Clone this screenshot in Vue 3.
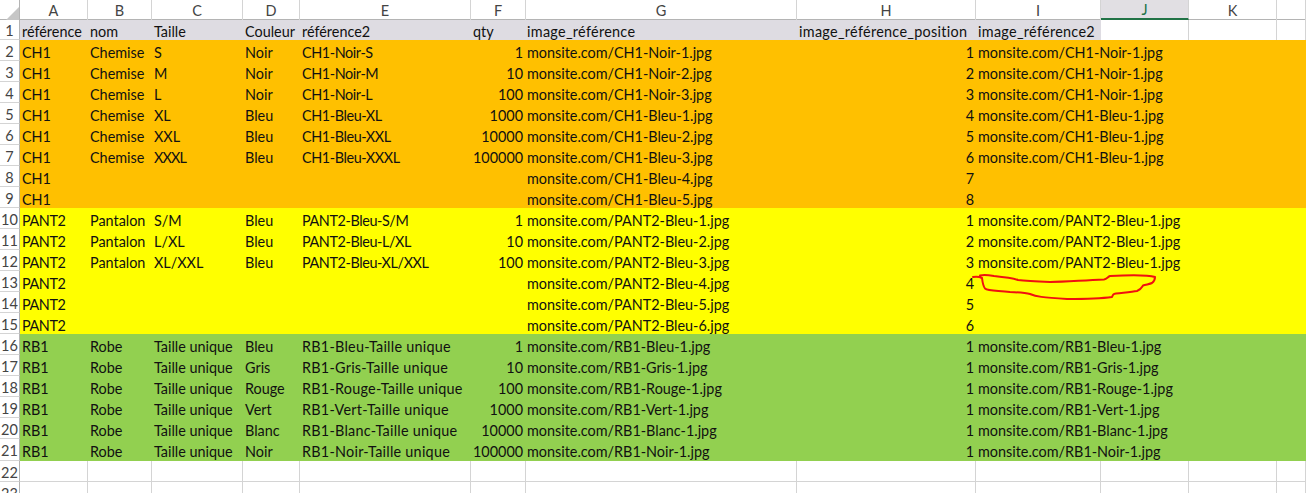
<script setup>
const cols = ['A','B','C','D','E','F','G','H','I','J','K','']
const header = ['référence','nom','Taille','Couleur','référence2','qty','image_référence','image_référence_position','image_référence2']
const ch = [
  ['CH1','Chemise','S','Noir','CH1-Noir-S',1,'monsite.com/CH1-Noir-1.jpg',1,'monsite.com/CH1-Noir-1.jpg'],
  ['CH1','Chemise','M','Noir','CH1-Noir-M',10,'monsite.com/CH1-Noir-2.jpg',2,'monsite.com/CH1-Noir-1.jpg'],
  ['CH1','Chemise','L','Noir','CH1-Noir-L',100,'monsite.com/CH1-Noir-3.jpg',3,'monsite.com/CH1-Noir-1.jpg'],
  ['CH1','Chemise','XL','Bleu','CH1-Bleu-XL',1000,'monsite.com/CH1-Bleu-1.jpg',4,'monsite.com/CH1-Bleu-1.jpg'],
  ['CH1','Chemise','XXL','Bleu','CH1-Bleu-XXL',10000,'monsite.com/CH1-Bleu-2.jpg',5,'monsite.com/CH1-Bleu-1.jpg'],
  ['CH1','Chemise','XXXL','Bleu','CH1-Bleu-XXXL',100000,'monsite.com/CH1-Bleu-3.jpg',6,'monsite.com/CH1-Bleu-1.jpg'],
  ['CH1','','','','','','monsite.com/CH1-Bleu-4.jpg',7,''],
  ['CH1','','','','','','monsite.com/CH1-Bleu-5.jpg',8,''],
]
const pant = [
  ['PANT2','Pantalon','S/M','Bleu','PANT2-Bleu-S/M',1,'monsite.com/PANT2-Bleu-1.jpg',1,'monsite.com/PANT2-Bleu-1.jpg'],
  ['PANT2','Pantalon','L/XL','Bleu','PANT2-Bleu-L/XL',10,'monsite.com/PANT2-Bleu-2.jpg',2,'monsite.com/PANT2-Bleu-1.jpg'],
  ['PANT2','Pantalon','XL/XXL','Bleu','PANT2-Bleu-XL/XXL',100,'monsite.com/PANT2-Bleu-3.jpg',3,'monsite.com/PANT2-Bleu-1.jpg'],
  ['PANT2','','','','','','monsite.com/PANT2-Bleu-4.jpg',4,''],
  ['PANT2','','','','','','monsite.com/PANT2-Bleu-5.jpg',5,''],
  ['PANT2','','','','','','monsite.com/PANT2-Bleu-6.jpg',6,''],
]
const rb = ['Bleu','Gris','Rouge','Vert','Blanc','Noir'].map((c,i)=>['RB1','Robe','Taille unique',c,`RB1-${c}-Taille unique`,10**i,`monsite.com/RB1-${c}-1.jpg`,1,`monsite.com/RB1-${c}-1.jpg`])
const rows = [
  {cells:header,cls:'head'},
  ...ch.map(c=>({cells:c,cls:'orange'})),
  ...pant.map(c=>({cells:c,cls:'yellow'})),
  ...rb.map((c,i)=>({cells:c,cls:i===5?'green last':'green'})),
  {cells:[],cls:'empty'},
  {cells:[],cls:'empty'},
]
const cellClass = (r,i) => {
  const head = r.cls==='head'
  const v = String(r.cells[i] ?? '')
  return {
    right: !head && (i===5 || i===7),
    wide: head && i>=6,
    qty: i===5,
    img: i===6,
    // the caps of the substitute font run wider than the reference's, its lowercase narrower
    tight: !head && ((i===0 && v==='PANT2') || (i===4 && !v.startsWith('RB1'))),
    caps: !head && i===2 && v==='XXXL',
    loose: !head && i===4 && v.startsWith('RB1'),
  }
}
</script>

<template>
  <div class="sheet">
    <div class="colhead">
      <div class="corner"><svg width="14" height="14" viewBox="0 0 14 14"><polygon points="14,1 14,14 1,14" fill="#c6c6c6"/></svg></div>
      <div v-for="(c,i) in cols" :key="i" class="ch" :class="{active:c==='J'}">{{ c }}</div>
    </div>
    <div v-for="(r,ri) in rows" :key="ri" class="row" :class="r.cls">
      <div class="num">{{ ri+1 }}</div>
      <div class="band">
        <div v-for="(c,i) in cols" :key="i" class="cell" :class="cellClass(r,i)">{{ r.cells[i] }}</div>
      </div>
    </div>
    <svg class="scribble" width="190" height="32" viewBox="0 0 190 32"><path d="M3 7 C7 6.500 10 7 12 8 C12.500 12 13 16 15 18.500 C18 21 26 20.500 40 22 C50 22.500 56 23 60 24 C66 26.500 72 27.500 97 29 C115 29 135 28 142 27 C143 24.500 143 24 146 23.500 C155 22.500 162 22 167 21 C171 19.500 172 17 173 15.500 C176 14.500 180 14 182 13 C184 11.500 185 9 185 7 C180 5.500 160 5 140 6 C138 6.500 137 9 134 9.500 C110 10.500 95 12 80 12 C65 11.500 55 11 48 10 C42 8 34 7 24 6 C18 5 12 5 10 5.500" fill="none" stroke="#f01010" stroke-width="2" stroke-linejoin="round" stroke-linecap="round"/></svg>
  </div>
</template>

<style>
html, body { margin: 0; background: #fff; overflow: hidden; }
</style>
<style scoped>
.sheet { position: relative; width: 1306px; height: 493px; overflow: hidden; font-family: Lato, "Open Sans", sans-serif; font-size: 14.4px; color: #111; }
.colhead { display: grid; grid-template-columns: 20px 68px 64px 91px 57px 171px 55px 271px 179px 125px 88px 88px 29px; height: 20px; border-bottom: 1px solid #b4b4b4; box-sizing: border-box; }
.corner { display: flex; align-items: flex-end; justify-content: flex-end; border-right: 1px solid #b4b4b4; }
.ch { display: flex; align-items: center; justify-content: center; color: #444; border-right: 1px solid #d4d4d4; font-size: 14.5px; }
.ch.active { background: #e1dfe3; color: #217346; border-bottom: 2px solid #217346; height: 20px; box-sizing: border-box; }
.row { display: flex; height: 21px; }
.head { height: 20px; }
.last { height: 22px; }
.num { flex: 0 0 20px; display: flex; align-items: center; justify-content: center; padding-top: 2px; color: #444; border-right: 1px solid #b4b4b4; font-size: 14.5px; border-bottom: 1px solid #d4d4d4; box-sizing: border-box; }
.band { flex: 1; display: grid; grid-template-columns: 68px 64px 91px 57px 171px 55px 271px 179px 125px 88px 88px 29px; }
.cell { line-height: 26px; padding: 0 2px; white-space: nowrap; min-width: 0; }
.head .cell { line-height: 23px; }
.wide { letter-spacing: .3px; }
.right { text-align: right; }
.right.qty { padding-right: 3px; }
.img { padding-left: 1px; }
.tight { letter-spacing: -.4px; }
.caps { letter-spacing: -.8px; }
.loose { letter-spacing: .25px; }
.orange .band { background: #ffc000; }
.yellow .band { background: #ffff00; }
.green .band { background: #92d050; }
.head .band { background: linear-gradient(to right, #dedce2 1081px, #fff 1081px); }
.head .cell:nth-child(n+10), .empty .cell { border-right: 1px solid #d4d4d4; box-sizing: border-box; }
.head .cell:nth-child(n+10) { border-bottom: 1px solid #d4d4d4; }
.empty .cell { border-bottom: 1px solid #d4d4d4; }
.scribble { position: absolute; left: 970px; top: 270px; }
</style>
